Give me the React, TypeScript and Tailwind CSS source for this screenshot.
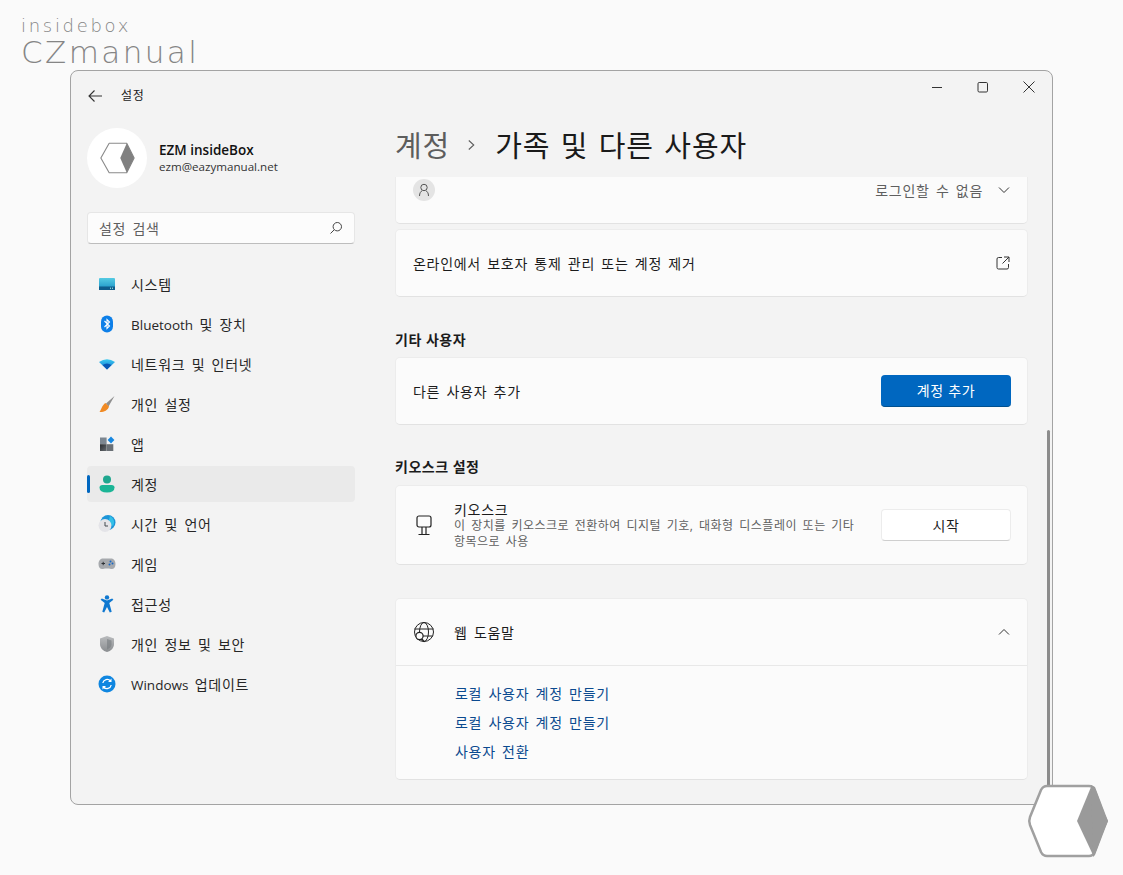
import React from "react";

const Hex = ({ className }: { className: string }) => (
  <svg viewBox="0 0 82 76" className={className}>
    <path d="M20 3H62Q66 3 67.5 7L79 38L67.5 69Q66 73 62 73H20Q16 73 14 69L3 42Q1.5 38 3 34L14 7Q16 3 20 3Z" fill="#fff" stroke="#a0a0a0" strokeWidth="2.5" />
    <path d="M64 4L81 38L66 72L50 38Z" fill="#9a9a9a" />
    <path d="M64 2L68 4L81 38L68 72L66 74Z" fill="#9a9a9a" />
  </svg>
);

const icons: Record<string, React.ReactNode> = {
  system: (
    <svg viewBox="0 0 18 14" className="h-[14px] w-[18px]">
      <defs><linearGradient id="s1" x1="0" y1="0" x2="0" y2="1"><stop offset="0" stopColor="#55cbe3" /><stop offset="1" stopColor="#1a90c4" /></linearGradient></defs>
      <rect x="1" y="1" width="16" height="12" rx="1" fill="url(#s1)" />
      <rect x="1" y="9.5" width="16" height="3.5" fill="#0f5c8c" />
      <rect x="12" y="10.7" width="1" height="1" fill="#bfe" /><rect x="14" y="10.7" width="1" height="1" fill="#bfe" />
    </svg>
  ),
  bt: (
    <svg viewBox="0 0 14 18" className="h-[18px] w-[14px]">
      <rect x="1" y="0.5" width="12" height="17" rx="6" fill="#0d7fe8" />
      <path d="M4.5 6L9.5 11L7 13.5V4.5L9.5 7L4.5 12" fill="none" stroke="#fff" strokeWidth="1.1" />
    </svg>
  ),
  wifi: (
    <svg viewBox="0 0 18 12" className="h-[12px] w-[18px]">
      <defs><linearGradient id="w1" x1="0" y1="0" x2="0" y2="1"><stop offset="0" stopColor="#3dcbf0" /><stop offset="1" stopColor="#0c72d0" /></linearGradient></defs>
      <path d="M1 4Q9 -1.5 17 4L9 11.5Z" fill="url(#w1)" />
      <path d="M4.5 7Q9 3.8 13.5 7L9 11.5Z" fill="#0a58b4" />
    </svg>
  ),
  brush: (
    <svg viewBox="0 0 18 18" className="h-[18px] w-[18px]">
      <path d="M16.5 1L8 8.5L10.5 11.5Z" fill="#8f8f8f" />
      <path d="M7.5 8L11 11.5C10 15.5 5 17.5 1.5 17C3.5 14.5 4 10 7.5 8Z" fill="#f08a24" />
    </svg>
  ),
  apps: (
    <svg viewBox="0 0 16 16" className="h-[16px] w-[16px]">
      <defs><linearGradient id="a1" x1="0" y1="0" x2="1" y2="1"><stop offset="0" stopColor="#2a2d31" /><stop offset="1" stopColor="#666b70" /></linearGradient></defs>
      <rect x="1" y="1.5" width="6.6" height="6.6" fill="#7c8690" />
      <rect x="1" y="8.2" width="6.6" height="6.8" fill="url(#a1)" />
      <rect x="7.7" y="8.2" width="6.6" height="6.8" fill="#6a7076" />
      <rect x="9.6" y="1.6" width="4.8" height="4.8" transform="rotate(45 12 4)" fill="#1787e0" />
    </svg>
  ),
  account: (
    <svg viewBox="0 0 16 18" className="h-[18px] w-[16px]">
      <circle cx="8" cy="4.5" r="4" fill="#1fa78f" />
      <path d="M.5 12.5Q.5 10 3.5 10H12.5Q15.5 10 15.5 12.5Q15.5 17.5 8 17.5Q.5 17.5 .5 12.5Z" fill="#1bb596" />
    </svg>
  ),
  time: (
    <svg viewBox="0 0 18 18" className="h-[18px] w-[18px]">
      <circle cx="10" cy="7.5" r="7.5" fill="#1c95d8" />
      <path d="M12 1A7 7 0 0 1 15 11L10 8Z" fill="#33c0e8" />
      <circle cx="7" cy="10.5" r="6.5" fill="#e4e4e8" />
      <path d="M7 7V11H10" fill="none" stroke="#454a50" strokeWidth="1" />
    </svg>
  ),
  game: (
    <svg viewBox="0 0 18 14" className="h-[14px] w-[18px]">
      <path d="M5 1.5H13C16 1.5 17.5 4 17.5 7C17.5 11 15.5 12.5 13 12L11 11.5H7L5 12C2.5 12.5 .5 11 .5 7C.5 4 2 1.5 5 1.5Z" fill="#a6a9ad" />
      <path d="M3.5 6.5H7M5.2 4.8V8.2" stroke="#2d3135" strokeWidth="1" />
      <circle cx="12.5" cy="4.5" r="1" fill="#1767c5" /><circle cx="14.5" cy="6.5" r="1" fill="#1767c5" /><circle cx="11.5" cy="7.5" r="1" fill="#1767c5" />
    </svg>
  ),
  access: (
    <svg viewBox="0 0 14 18" className="h-[18px] w-[14px]">
      <circle cx="7" cy="2.4" r="2.2" fill="#0f78d0" />
      <path d="M.6 4.8L1.8 3.6L7 5.5L12.2 3.6L13.4 4.8L9.3 8L11.7 16.8L9.8 17.6L7 12L4.2 17.6L2.3 16.8L4.7 8Z" fill="#0f78d0" />
    </svg>
  ),
  shield: (
    <svg viewBox="0 0 16 18" className="h-[18px] w-[16px]">
      <defs><linearGradient id="p1" x1="0" y1="0" x2="0" y2="1"><stop offset="0" stopColor="#b9bbbd" /><stop offset="1" stopColor="#8a8d90" /></linearGradient></defs>
      <path d="M8 1L15 3.5V9C15 13 12 16 8 17C4 16 1 13 1 9V3.5Z" fill="url(#p1)" />
      <path d="M8 4L12.5 5.5V9.5C12.5 11.5 10.5 13.5 8 14.5Z" fill="#777b7f" opacity=".6" />
    </svg>
  ),
  update: (
    <svg viewBox="0 0 18 18" className="h-[18px] w-[18px]">
      <circle cx="9" cy="9" r="8.5" fill="#0f86e0" />
      <path d="M4.8 8A4.4 4.4 0 0 1 12.5 6M13.2 10A4.4 4.4 0 0 1 5.5 12" fill="none" stroke="#fff" strokeWidth="1.3" />
      <path d="M13.5 3.5V7H10ZM4.5 14.5V11H8Z" fill="#fff" />
    </svg>
  ),
};

const nav: [string, string, string][] = [
  ["system", "", "시스템"],
  ["bt", "Bluetooth", " 및 장치"],
  ["wifi", "", "네트워크 및 인터넷"],
  ["brush", "", "개인 설정"],
  ["apps", "", "앱"],
  ["account", "", "계정"],
  ["time", "", "시간 및 언어"],
  ["game", "", "게임"],
  ["access", "", "접근성"],
  ["shield", "", "개인 정보 및 보안"],
  ["update", "Windows", " 업데이트"],
];

const card = "bg-[#fbfbfb] border border-[#ececec] border-b-[#e2e2e2] rounded-[5px]";
const ko = "font-['Open_Sans','Noto_Sans_CJK_KR',sans-serif]";

export default function App() {
  return (
    <div className={`relative h-[875px] w-[1123px] overflow-hidden bg-[#fafafa] text-[14px] tracking-[0.7px] [word-spacing:2px] text-[#1b1b1b] ${ko}`}>
      <div className="h-[70px] pl-[21px] pt-[14px] font-['DejaVu_Sans',sans-serif] font-extralight tracking-normal text-[#858585]">
        <div className="text-[18px] leading-[23px] tracking-[2.7px]">insidebox</div>
        <div className="text-[31px] leading-[30px] tracking-[2.4px]">CZmanual</div>
      </div>

      <div className="ml-[70px] flex h-[735px] w-[983px] flex-col rounded-[8px] border border-[#a3a3a3] bg-[#f3f3f3]">
        <div className="flex h-[50px] shrink-0 justify-between">
          <div className="flex items-center gap-[18px] pl-[16px]">
            <svg viewBox="0 0 16 16" className="h-[16px] w-[16px]" fill="none" stroke="#333" strokeWidth="1.1"><path d="M15 8H2M7.5 2.5L2 8L7.5 13.5" /></svg>
            <span className="text-[12px] leading-none">설정</span>
          </div>
          <div className="flex h-[32px] items-center gap-[30px] pr-[15px]">
            <svg viewBox="0 0 16 16" className="h-[16px] w-[16px]" fill="none" stroke="#333"><path d="M3 8.5H13" /></svg>
            <svg viewBox="0 0 16 16" className="h-[16px] w-[16px]" fill="none" stroke="#333"><rect x="3" y="3.5" width="9.5" height="9.5" rx="1.2" /></svg>
            <svg viewBox="0 0 16 16" className="h-[16px] w-[16px]" fill="none" stroke="#333"><path d="M2.5 2.5L13.5 13.5M13.5 2.5L2.5 13.5" /></svg>
          </div>
        </div>

        <div className="flex min-h-0 flex-1">
          <aside className="w-[284px] shrink-0 pl-[16px]">
            <div className="mt-[7px] flex h-[60px] items-center gap-[12px]">
              <div className="flex h-[60px] w-[60px] items-center justify-center rounded-full bg-white">
                <svg viewBox="0 0 40 36" className="h-[34px] w-[37px]">
                  <path d="M11 2H30L38 18L30 34H11L2 18Z" fill="#fff" stroke="#8a8a8a" strokeWidth="1.2" strokeLinejoin="round" />
                  <path d="M30 2L38 18L30 34L23 18Z" fill="#808080" />
                </svg>
              </div>
              <div className="tracking-normal [word-spacing:0]">
                <div className="text-[13.5px] font-semibold leading-[17px] text-[#111]">EZM insideBox</div>
                <div className="text-[11.6px] leading-[16px] text-[#333]">ezm@eazymanual.net</div>
              </div>
            </div>

            <div className="mt-[24px] flex h-[32px] w-[268px] items-center justify-between rounded-[4px] border border-[#e6e6e6] border-b-[#bdbdbd] bg-[#fcfcfc] pl-[11px] pr-[11px]">
              <span className="text-[#5f5f5f]">설정 검색</span>
              <svg viewBox="0 0 14 14" className="h-[14px] w-[14px]" fill="none" stroke="#444" strokeWidth="1"><circle cx="8.3" cy="5.7" r="4.2" /><path d="M5.2 8.8L1.5 12.5" /></svg>
            </div>

            <nav className="mt-[22px] flex w-[268px] flex-col gap-[4px]">
              {nav.map(([k, latin, label]) => (
                <div key={k} className={`relative flex h-[36px] items-center rounded-[4px] ${k === "account" ? "bg-[#eaeaea]" : ""}`}>
                  {k === "account" && <div className="absolute left-0 top-[9px] h-[18px] w-[3px] rounded-full bg-[#0067c0]" />}
                  <div className="mr-[4px] flex w-[40px] shrink-0 justify-center">{icons[k]}</div>
                  <span className={`text-[#262626] ${latin ? "pt-[2px]" : ""}`}>
                    {latin && <span className="text-[13.5px] tracking-normal">{latin}</span>}
                    {label}
                  </span>
                </div>
              ))}
            </nav>
          </aside>

          <main className="flex min-w-0 flex-1 flex-col pl-[40px] pr-[24px]">
            <h1 className="flex h-[56px] shrink-0 items-center pb-[8px] text-[29px] font-normal leading-none tracking-[0.9px]">
              <span className="text-[#5d5d5d]">계정</span>
              <svg viewBox="0 0 10 14" className="ml-[17px] mr-[19px] h-[14px] w-[9px]" fill="none" stroke="#5d5d5d" strokeWidth="1.2"><path d="M2 2L7.5 7L2 12" /></svg>
              <span className="text-[#1a1a1a]">가족 및 다른 사용자</span>
            </h1>

            <div className="min-h-0 flex-1 overflow-hidden">
              <div className={`${card} -mt-[21px] flex h-[68px] items-center justify-between pl-[17px] pr-[17px]`}>
                <div className="flex h-[22px] w-[22px] items-center justify-center rounded-full bg-[#e4e4e4]">
                  <svg viewBox="0 0 14 14" className="h-[14px] w-[14px]" fill="none" stroke="#555" strokeWidth="1"><circle cx="7" cy="4.5" r="3.2" /><path d="M2.5 13C2.5 10 4 8 5 8M11.5 13C11.5 10 10 8 9 8" /></svg>
                </div>
                <div className="flex items-center gap-[15px]">
                  <span className="text-[#5f5f5f]">로그인할 수 없음</span>
                  <svg viewBox="0 0 12 12" className="h-[12px] w-[12px]" fill="none" stroke="#333"><path d="M1 3.5L6 8.5L11 3.5" /></svg>
                </div>
              </div>
              <div className={`${card} mt-[5px] flex h-[68px] items-center justify-between pl-[17px] pr-[17px]`}>
                <span>온라인에서 보호자 통제 관리 또는 계정 제거</span>
                <svg viewBox="0 0 14 14" className="h-[14px] w-[14px]" fill="none" stroke="#333"><path d="M6 1.5H2.5A1.5 1.5 0 0 0 1 3V11.5A1.5 1.5 0 0 0 2.5 13H11A1.5 1.5 0 0 0 12.5 11.5V8M8 1H13V6M13 1L6.5 7.5" /></svg>
              </div>

              <h2 className="flex h-[60px] items-end pb-[7px] text-[14px] font-bold leading-[20px] tracking-[0.5px] [word-spacing:0]">기타 사용자</h2>
              <div className={`${card} flex h-[68px] items-center justify-between pl-[17px] pr-[16px]`}>
                <span>다른 사용자 추가</span>
                <button className="h-[32px] w-[130px] rounded-[4px] border-b border-b-[#00508f] bg-[#0067c0] text-white">계정 추가</button>
              </div>

              <h2 className="flex h-[60px] items-end pb-[8px] text-[14px] font-bold leading-[20px] tracking-[0.5px] [word-spacing:0]">키오스크 설정</h2>
              <div className={`${card} flex h-[80px] items-center justify-between pl-[17px] pr-[16px]`}>
                <div className="flex items-center">
                  <svg viewBox="0 0 22 22" className="mr-[19px] h-[22px] w-[22px] shrink-0" fill="none" stroke="#222" strokeWidth="1.2"><rect x="4" y="2" width="14" height="11" rx="2" /><path d="M9 13V20M13 13V20M5.5 20.5H16.5" /></svg>
                  <div>
                    <div className="leading-[17px]">키오스크</div>
                    <div className="w-[410px] text-[12px] leading-[16px] tracking-[0.5px] text-[#5f5f5f]">이 장치를 키오스크로 전환하여 디지털 기호, 대화형 디스플레이 또는 기타<br />항목으로 사용</div>
                  </div>
                </div>
                <button className="h-[32px] w-[130px] rounded-[4px] border border-[#ececec] border-b-[#cfcfcf] bg-white">시작</button>
              </div>

              <div className={`${card} mt-[33px] h-[182px]`}>
                <div className="flex h-[67px] items-center justify-between border-b border-[#e8e8e8] pl-[17px] pr-[17px]">
                  <div className="flex items-center">
                    <svg viewBox="0 0 22 22" className="mr-[19px] h-[22px] w-[22px]" fill="none" stroke="#222" strokeWidth="1"><circle cx="11" cy="11" r="9.5" /><ellipse cx="11" cy="11" rx="4.5" ry="9.5" /><path d="M1.5 8H20.5M10 15H20" /><circle cx="6.5" cy="15" r="3.6" fill="#fbfbfb" strokeWidth="1.2" /><path d="M9 17.8L11.5 21" strokeWidth="1.2" /></svg>
                    <span>웹 도움말</span>
                  </div>
                  <svg viewBox="0 0 12 12" className="h-[12px] w-[12px]" fill="none" stroke="#333"><path d="M1 8.5L6 3.5L11 8.5" /></svg>
                </div>
                <div className="flex flex-col gap-[9px] pl-[59px] pt-[18px] leading-[20px] text-[#0b4a8f]">
                  <span>로컬 사용자 계정 만들기</span>
                  <span>로컬 사용자 계정 만들기</span>
                  <span>사용자 전환</span>
                </div>
              </div>
            </div>
          </main>
        </div>
      </div>

      <div className="absolute left-[1047px] top-[430px] h-[370px] w-[3px] rounded-full bg-[#8b8b8b]" />
      <Hex className="absolute left-[1027px] top-[783px] h-[76px] w-[82px]" />
    </div>
  );
}
